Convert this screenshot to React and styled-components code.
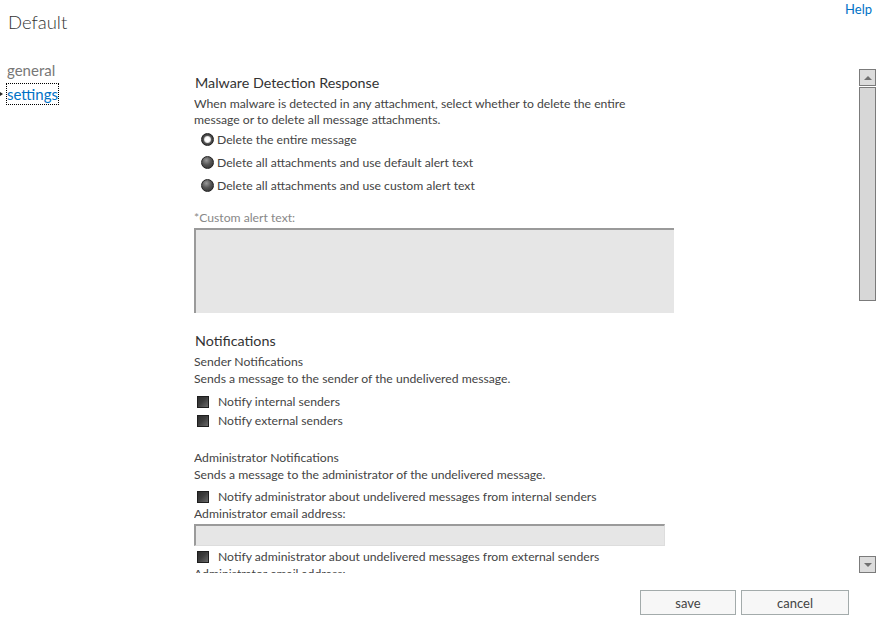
import React from 'react';
import styled, { createGlobalStyle } from 'styled-components';

const GlobalStyle = createGlobalStyle`
  html, body {
    margin: 0;
    padding: 0;
    background: #fff;
  }
  body {
    font-family: Lato, "Open Sans", sans-serif;
    color: #444;
  }
`;

const Page = styled.div`
  width: 880px;
  height: 619px;
  display: flex;
  flex-direction: column;
  overflow: hidden;
`;

const Header = styled.div`
  height: 60px;
  display: flex;
  justify-content: space-between;
  align-items: flex-start;
`;

const Title = styled.h1`
  margin: 8px 0 0 8px;
  font-size: 18.5px;
  font-weight: 300;
  line-height: 28px;
  color: #333;
`;

const HelpLink = styled.a`
  margin: 0 8px 0 0;
  font-size: 13px;
  line-height: 18px;
  color: #0072c6;
  text-decoration: none;
`;

const Main = styled.div`
  display: flex;
`;

const Nav = styled.div`
  width: 194px;
  display: flex;
  flex-direction: column;
  gap: 4px;
`;

const NavItem = styled.div`
  position: relative;
  align-self: flex-start;
  margin-left: 7px;
  font-size: 15px;
  line-height: 18px;
  padding: 1px 0;
  color: ${p => (p.$active ? '#0072c6' : '#777')};
  outline: ${p => (p.$active ? '1px dotted #000' : 'none')};

  &::before {
    content: '';
    display: ${p => (p.$active ? 'block' : 'none')};
    position: absolute;
    left: -7px;
    top: 8px;
    border-left: 3px solid #222;
    border-top: 2px solid transparent;
    border-bottom: 2px solid transparent;
  }
`;

const Pane = styled.div`
  display: flex;
  padding-top: 9px;
`;

const Content = styled.div`
  width: 665px;
  height: 504px;
  overflow: hidden;
`;

const Heading = styled.div`
  margin-top: ${p => p.$top || 0}px;
  margin-left: 1px;
  font-size: 14.3px;
  line-height: 20px;
  color: #333;
`;

const Text = styled.div`
  margin-top: ${p => p.$top || 0}px;
  font-size: 12.2px;
  line-height: 16px;
  color: ${p => (p.$muted ? '#888' : '#444')};
`;

const RadioList = styled.div`
  display: flex;
  flex-direction: column;
`;

const RadioRow = styled.label`
  height: 23px;
  display: flex;
  align-items: center;
  gap: 3px;
  padding-left: 7px;
  font-size: 12.2px;
  color: #444;
`;

const RadioDot = styled.span`
  width: 11px;
  height: 11px;
  border-radius: 50%;
  border: 1px solid #222;
  background: ${p =>
    p.$checked
      ? 'radial-gradient(circle, #fff 0 2px, #ddd 3px, #555 4px, #333 6px)'
      : 'radial-gradient(circle at 40% 30%, #999 0, #555 45%, #2a2a2a 100%)'};
`;

const CheckRow = styled.label`
  height: 19px;
  margin-top: ${p => p.$top || 0}px;
  display: flex;
  align-items: center;
  gap: 9px;
  padding-left: 3px;
  font-size: 12.2px;
  color: #444;
`;

const CheckBox = styled.span`
  width: 10px;
  height: 10px;
  border: 1px solid #1e1e1e;
  background: linear-gradient(135deg, #2e2e2e 0, #3c3c3c 45%, #6a6a6a 100%);
`;

const TextArea = styled.div`
  margin-top: 2px;
  width: 478px;
  height: 83px;
  background: #e6e6e6;
  border-top: 2px solid #9a9a9a;
  border-left: 2px solid #9a9a9a;
`;

const InputBox = styled.div`
  margin-top: 2px;
  width: 468px;
  height: 19px;
  background: #e6e6e6;
  border-top: 2px solid #9a9a9a;
  border-left: 2px solid #9a9a9a;
  border-right: 1px solid #ddd;
  border-bottom: 1px solid #ddd;
`;

const Scrollbar = styled.div`
  width: 17px;
  height: 504px;
  display: flex;
  flex-direction: column;
`;

const ScrollButton = styled.div`
  height: 15px;
  border: 1px solid #7b7b7b;
  background: #dcdcdc;
  display: flex;
  align-items: center;
  justify-content: center;
`;

const Arrow = styled.span`
  width: 0;
  height: 0;
  border-left: 4px solid transparent;
  border-right: 4px solid transparent;
  ${p =>
    p.$down
      ? 'border-top: 4px solid #707070;'
      : 'border-bottom: 4px solid #707070;'}
`;

const Thumb = styled.div`
  margin-top: 1px;
  height: 212px;
  border: 1px solid #7b7b7b;
  background: #d7d7d7;
`;

const Track = styled.div`
  flex: 1;
`;

const Footer = styled.div`
  margin-top: 17px;
  padding-right: 31px;
  display: flex;
  justify-content: flex-end;
  gap: 5px;
`;

const Button = styled.button`
  width: ${p => p.$width}px;
  height: 25px;
  background: #f7f7f7;
  border: 1px solid #a3abab;
  font-family: inherit;
  font-size: 13px;
  color: #444;
  padding: 0;
`;

const radios = [
  { label: 'Delete the entire message', checked: true },
  { label: 'Delete all attachments and use default alert text' },
  { label: 'Delete all attachments and use custom alert text' },
];

export default function App() {
  return (
    <Page>
      <GlobalStyle />
      <Header>
        <Title>Default</Title>
        <HelpLink href="#">Help</HelpLink>
      </Header>
      <Main>
        <Nav>
          <NavItem>general</NavItem>
          <NavItem $active>settings</NavItem>
        </Nav>
        <Pane>
          <Content>
            <Heading $top={4}>Malware Detection Response</Heading>
            <Text $top={3}>
              When malware is detected in any attachment, select whether to delete the entire
              <br />
              message or to delete all message attachments.
            </Text>
            <RadioList>
              {radios.map(r => (
                <RadioRow key={r.label}>
                  <RadioDot $checked={r.checked} />
                  {r.label}
                </RadioRow>
              ))}
            </RadioList>
            <Text $top={13} $muted>*Custom alert text:</Text>
            <TextArea />

            <Heading $top={18}>Notifications</Heading>
            <Text $top={3}>Sender Notifications</Text>
            <Text $top={1}>Sends a message to the sender of the undelivered message.</Text>
            <CheckRow $top={5}>
              <CheckBox />
              Notify internal senders
            </CheckRow>
            <CheckRow>
              <CheckBox />
              Notify external senders
            </CheckRow>

            <Text $top={20}>Administrator Notifications</Text>
            <Text $top={1}>Sends a message to the administrator of the undelivered message.</Text>
            <CheckRow $top={4}>
              <CheckBox />
              Notify administrator about undelivered messages from internal senders
            </CheckRow>
            <Text>Administrator email address:</Text>
            <InputBox />
            <CheckRow $top={1}>
              <CheckBox />
              Notify administrator about undelivered messages from external senders
            </CheckRow>
            <Text>Administrator email address:</Text>
          </Content>
          <Scrollbar>
            <ScrollButton>
              <Arrow />
            </ScrollButton>
            <Thumb />
            <Track />
            <ScrollButton>
              <Arrow $down />
            </ScrollButton>
          </Scrollbar>
        </Pane>
      </Main>
      <Footer>
        <Button $width={96}>save</Button>
        <Button $width={108}>cancel</Button>
      </Footer>
    </Page>
  );
}
